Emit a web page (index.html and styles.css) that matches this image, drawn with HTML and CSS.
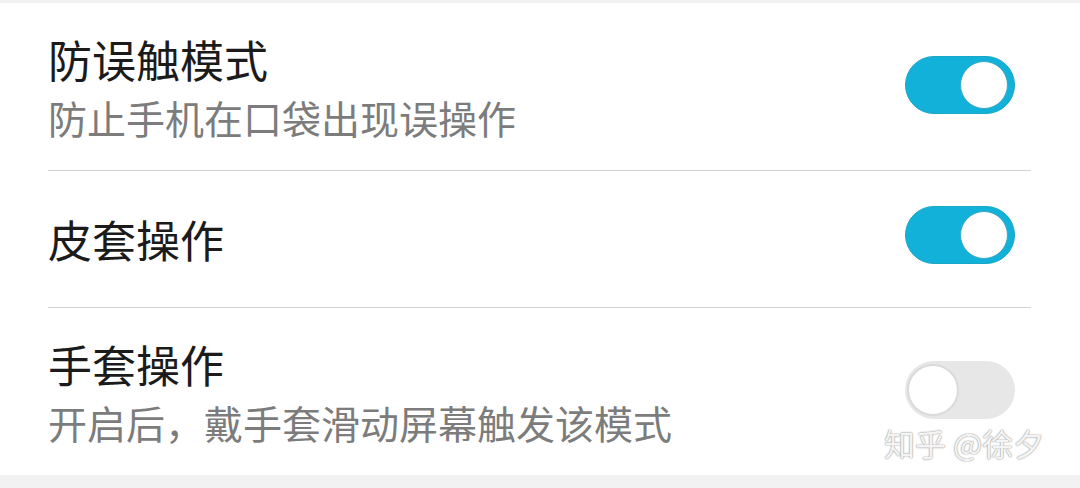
FILE: index.html
```html
<!DOCTYPE html>
<html lang="zh-CN">
<head>
  <meta charset="UTF-8" />
  <meta name="viewport" content="width=device-width, initial-scale=1.0" />
  <title>防误触设置</title>
  <link rel="stylesheet" href="styles.css">
</head>
<body>

  <div class="top-bar"></div>

  <div class="list">
    <div class="row row-first">
      <div class="text">
        <div class="title">防误触模式</div>
        <div class="summary">防止手机在口袋出现误操作</div>
      </div>
      <div class="switch on"><span class="knob"></span></div>
    </div>

    <div class="row row-single">
      <div class="text">
        <div class="title">皮套操作</div>
      </div>
      <div class="switch on"><span class="knob"></span></div>
    </div>

    <div class="row row-last">
      <div class="text">
        <div class="title">手套操作</div>
        <div class="summary">开启后，戴手套滑动屏幕触发该模式</div>
      </div>
      <div class="switch off"><span class="knob"></span></div>
    </div>
  </div>

  <div class="bottom-bar"></div>

  <!-- 水印 -->
  <div class="watermark">知乎 @徐夕</div>

</body>
</html>
```

FILE: styles.css
```css
html, body {
  margin: 0;
  padding: 0;
}

body {
  font-family: "Noto Sans CJK SC", "Noto Sans", sans-serif;
  background: #fff;
  width: 1080px;
  height: 488px;
  position: relative;
  overflow: hidden;
}

.top-bar {
  height: 3px;
  background: #f1f1f1;
}

.list {
  margin: 0 49px 0 48px;
}

.row {
  display: flex;
  align-items: center;
  justify-content: space-between;
  border-bottom: 1px solid #d3d3d3;
}

.row-first {
  padding: 28px 0 23px;
}

.row-single {
  padding: 40px 0 40px;
}

.row-last {
  padding: 28px 0 23px;
  border-bottom: none;
}

.title {
  font-size: 44px;
  line-height: 56px;
  color: #1b1b1b;
}

.summary {
  font-size: 39px;
  line-height: 60px;
  color: #7c7c7c;
  white-space: nowrap;
}

/* 开关 */
.switch {
  position: relative;
  width: 110px;
  height: 58px;
  border-radius: 29px;
  box-sizing: border-box;
  margin: -8px 16px 0 0;
  flex-shrink: 0;
}

.switch.on {
  background: #12b1da;
  border: 1px solid #1ba6c6;
}

.switch.off {
  background: #e7e7e7;
}

.knob {
  position: absolute;
  border-radius: 50%;
  background: #fff;
  box-sizing: border-box;
}

.switch.on .knob {
  width: 48px;
  height: 48px;
  top: 4px;
  right: 6px;
  border: 1px solid #3aa7c2;
}

.switch.off .knob {
  width: 52px;
  height: 52px;
  top: 3px;
  left: 2px;
  border: 2px solid #dadada;
}

.bottom-bar {
  height: 13px;
  background: #f2f2f2;
}

.watermark {
  position: absolute;
  left: 884px;
  top: 421px;
  font-size: 31px;
  line-height: 44px;
  color: #f4f4f4;
  text-shadow: 0 0 1px #8a8a8a, 0 0 2px #b0b0b0;
  white-space: nowrap;
}
```
